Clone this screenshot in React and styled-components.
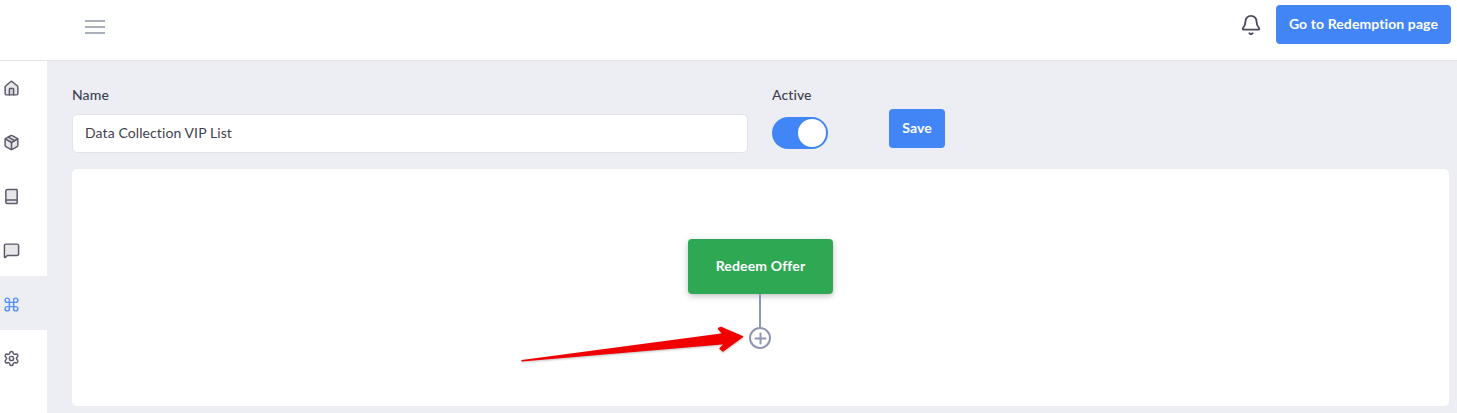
import React from "react";
import styled, { createGlobalStyle } from "styled-components";
import { Home, Package, Book, MessageSquare, Command, Settings, Bell, Plus } from "lucide-react";

const Global = createGlobalStyle`
  html, body { margin: 0; padding: 0; background: #edeef4; }
  body { font-family: "Lato", "Open Sans", sans-serif; color: #3f3f50; }
  * { box-sizing: border-box; }
`;

const Page = styled.div`
  width: 1457px;
  height: 413px;
  display: flex;
  flex-direction: column;
  overflow: hidden;
`;

const TopBar = styled.header`
  position: relative;
  z-index: 1;
  flex: 0 0 60px;
  height: 60px;
  background: #fff;
  box-shadow: 0 1px 0 #e2e3e9;
  display: flex;
  align-items: center;
  justify-content: space-between;
  padding: 0 6px 0 85px;
`;

const Burger = styled.div`
  width: 20px;
  display: flex;
  flex-direction: column;
  gap: 4px;
  margin-top: -6px;
  span { display: block; height: 2px; background: #a8afb8; }
`;

const TopActions = styled.div`
  display: flex;
  align-items: center;
  gap: 14px;
  margin-top: -11px;
  color: #4a4a5a;
`;

const PrimaryButton = styled.button`
  border: 0;
  border-radius: 4px;
  background: #4285f6;
  color: #fff;
  font: 700 14px "Lato", sans-serif;
  letter-spacing: 0.1px;
  height: ${p => p.$h}px;
  width: ${p => p.$w}px;
  padding: 0 0 2px;
`;

const Body = styled.div`
  flex: 1;
  display: flex;
  min-height: 0;
`;

const Sidebar = styled.nav`
  flex: 0 0 47px;
  background: #fff;
`;

const NavItem = styled.div`
  height: 54px;
  padding: 2px 0 0 3px;
  display: flex;
  align-items: center;
  background: ${p => (p.$active ? "#edeef4" : "transparent")};
  color: ${p => (p.$active ? "#5b8ff9" : "#5b5b6b")};
  svg {
    width: 17px;
    height: 17px;
    stroke-width: 2.1;
    fill: ${p => (p.$duo ? "rgba(91, 91, 107, 0.14)" : "none")};
  }
`;

const Main = styled.main`
  flex: 1;
  padding: 26px 8px 7px 25px;
  display: flex;
  flex-direction: column;
`;

const FormRow = styled.div`
  display: flex;
  align-items: flex-start;
  height: 83px;
`;

const Field = styled.div`
  display: flex;
  flex-direction: column;
  width: ${p => p.$w}px;
  margin-right: ${p => p.$mr}px;
`;

const Label = styled.label`
  font-size: 14px;
  font-weight: 500;
  line-height: 17px;
  letter-spacing: 0.1px;
  color: #3f3f50;
  margin-bottom: ${p => p.$mb}px;
`;

const TextInput = styled.input`
  height: 39px;
  width: 100%;
  background: #fff;
  border: 1px solid #e0e3ee;
  border-radius: 5px;
  padding: 0 12px 2px;
  font: 400 14px "Lato", sans-serif;
  letter-spacing: 0.1px;
  color: #3f3f50;
  outline: none;
`;

const Toggle = styled.div`
  width: 56px;
  height: 32px;
  border-radius: 16px;
  background: #4285f6;
  display: flex;
  justify-content: flex-end;
  align-items: center;
  padding-right: 2px;
`;

const Knob = styled.div`
  width: 28px;
  height: 28px;
  border-radius: 50%;
  background: #fff;
`;

const SaveWrap = styled.div`
  padding-top: 23px;
`;

const Canvas = styled.section`
  position: relative;
  flex: 1;
  background: #fff;
  border-radius: 5px;
  display: flex;
  flex-direction: column;
  align-items: center;
  padding-top: 70px;
`;

const Node = styled.div`
  width: 145px;
  height: 55px;
  background: #2fa854;
  border-radius: 4px;
  box-shadow: 0 2px 6px rgba(0, 0, 0, 0.25);
  color: #fff;
  font: 700 14px "Lato", sans-serif;
  letter-spacing: 0.15px;
  padding-bottom: 2px;
  display: flex;
  align-items: center;
  justify-content: center;
`;

const Connector = styled.div`
  width: 2px;
  height: 33px;
  margin-right: 1px;
  background: #8f95b2;
`;

const AddCircle = styled.div`
  width: 22px;
  height: 22px;
  margin-right: 1px;
  border: 2px solid #8f95b2;
  border-radius: 50%;
  color: #8f95b2;
  display: flex;
  align-items: center;
  justify-content: center;
`;

const Arrow = styled.svg`
  position: absolute;
  left: 450px;
  top: 158px;
  overflow: visible;
  filter: drop-shadow(0 1px 1px rgba(0, 0, 0, 0.25));
`;

export default function App() {
  return (
    <Page>
      <Global />
      <TopBar>
        <Burger><span /><span /><span /></Burger>
        <TopActions>
          <Bell size={22} strokeWidth={2} />
          <PrimaryButton $w={175} $h={39}>Go to Redemption page</PrimaryButton>
        </TopActions>
      </TopBar>
      <Body>
        <Sidebar>
          <NavItem $duo><Home /></NavItem>
          <NavItem $duo><Package /></NavItem>
          <NavItem $duo><Book /></NavItem>
          <NavItem $duo><MessageSquare /></NavItem>
          <NavItem $active><Command /></NavItem>
          <NavItem><Settings /></NavItem>
        </Sidebar>
        <Main>
          <FormRow>
            <Field $w={676} $mr={24}>
              <Label $mb={11}>Name</Label>
              <TextInput readOnly value="Data Collection VIP List" />
            </Field>
            <Field $w={56} $mr={61}>
              <Label $mb={14}>Active</Label>
              <Toggle><Knob /></Toggle>
            </Field>
            <SaveWrap>
              <PrimaryButton $w={56} $h={39}>Save</PrimaryButton>
            </SaveWrap>
          </FormRow>
          <Canvas>
            <Node>Redeem Offer</Node>
            <Connector />
            <AddCircle><Plus size={17} strokeWidth={2.8} /></AddCircle>
            <Arrow width="224" height="36" viewBox="0 0 224 36">
              <polygon
                points="0,33.7 201,7 196.5,1.5 199,0.5 220.5,9.7 201,24 198,21.5 203,16.5"
                fill="#f00000"
                stroke="#f00000"
                strokeWidth="1.4"
                strokeLinejoin="round"
              />
            </Arrow>
          </Canvas>
        </Main>
      </Body>
    </Page>
  );
}
